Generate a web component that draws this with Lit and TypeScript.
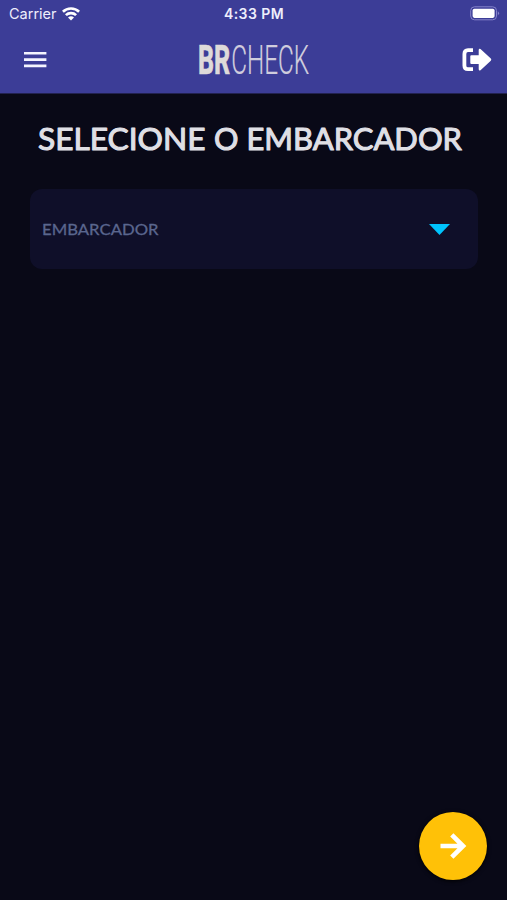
import { LitElement, html, css } from "lit";
import { customElement } from "lit/decorators.js";

@customElement("app-status-bar")
class AppStatusBar extends LitElement {
  static styles = css`
    :host { display: grid; grid-template-columns: 1fr auto 1fr; align-items: center; height: 27px; padding: 0 7px 0 9px; color: #eeeefc; font: 14.5px/27px Inter, sans-serif; }
    .carrier { display: flex; align-items: center; gap: 5px; }
    .time { margin-right: 1px; font-weight: 600; font-size: 14px; letter-spacing: 0.45px; }
    .battery { justify-self: end; }
    svg { display: block; }
  `;
  render() {
    return html`
      <div class="carrier">
        <span>Carrier</span>
        <svg width="18" height="14" viewBox="0 0 18 14" fill="none" stroke="#fff" stroke-width="2.7">
          <path d="M.9 4.7C5.3.4 12.7.4 17.1 4.7" />
          <path d="M3.9 8.1C6.7 5.4 11.3 5.4 14.1 8.1" />
          <path d="M9 13.5 6 10.5Q9 8 12 10.5Z" fill="#fff" stroke="none" />
        </svg>
      </div>
      <span class="time">4:33 PM</span>
      <svg class="battery" width="30" height="15" viewBox="0 0 30 15">
        <rect x=".7" y=".8" width="25.8" height="13" rx="3.8" fill="none" stroke="#8583ca" />
        <rect x="2.6" y="2.7" width="22" height="9.2" rx="1.8" fill="#fff" />
        <path d="M27.8 5.2Q30.4 7.3 27.8 9.4Z" fill="#8583ca" />
      </svg>
    `;
  }
}

@customElement("app-header")
class AppHeader extends LitElement {
  static styles = css`
    :host { display: grid; grid-template-columns: 1fr auto 1fr; align-items: center; height: 66px; padding: 0 15px 0 24px; }
    svg { display: block; }
    .logo { margin-right: 8px; font-family: Roboto, sans-serif; font-size: 40.5px; overflow: visible; }
    .heavy { font-weight: 800; fill: #dedad9; stroke: #dedad9; stroke-width: 0.5; }
    .light { font-weight: 300; fill: #d0cddd; stroke: #d0cddd; stroke-width: 0.2; }
    .exit { justify-self: end; }
  `;
  render() {
    return html`
      <svg width="23" height="16" viewBox="0 0 23 16" fill="#f4f4ff">
        <path d="M0 0h22.4v2.6H0zM0 6.3h22.4v2.6H0zM0 12.6h22.4v2.6H0z" />
      </svg>
      <svg class="logo" width="112" height="48" viewBox="0 -7 112 48" role="img" aria-label="BRCHECK">
        <text class="heavy" x="0" y="31" textLength="32.3" lengthAdjust="spacingAndGlyphs">BR</text>
        <text class="light" x="33.2" y="31" textLength="78" lengthAdjust="spacingAndGlyphs">CHECK</text>
      </svg>
      <svg class="exit" width="30" height="24" viewBox="0 0 30 24">
        <path d="M11 2.2H6Q2.4 2.2 2.4 6V17.4Q2.4 21.2 6 21.2H11" fill="none" stroke="#fff" stroke-width="3.8" />
        <path d="M8.3 8.2Q8.3 7.2 9.3 7.2H16.7V2Q16.9.2 18.5 1.1L28.8 10.5Q29.8 11.6 28.8 12.7L18.5 22.2Q16.9 23.1 16.7 21.3V16.1H9.3Q8.3 16.1 8.3 15.1Z" fill="#fff" />
      </svg>
    `;
  }
}

@customElement("app-root")
class AppRoot extends LitElement {
  static styles = css`
    :host { display: flex; flex-direction: column; box-sizing: border-box; height: 900px; background: #090917; font-family: Lato, sans-serif; }
    .top { background: #3c3d97; height: 93px; border-bottom: 1px solid #22224f; }
    svg { display: block; }
    .title { margin: 26px 30px 0; height: 40px; }
    .title svg { width: 100%; height: 40px; }
    .title text { font-size: 30.5px; font-weight: 400; fill: #dfdfe5; stroke: #dfdfe5; stroke-width: 1.1; stroke-linejoin: round; }
    .select { display: flex; align-items: center; justify-content: space-between; box-sizing: border-box; height: 80px; margin: 29px 29px 0 30px; padding: 0 28px 0 12px; border-radius: 12px; background: #0f0f29; }
    .select text { font-size: 16px; fill: #5a668e; stroke: #5a668e; stroke-width: 0.3; stroke-linejoin: round; }
    .next { display: grid; place-items: center; width: 68px; height: 68px; margin: auto 20px 20px auto; padding: 0; border: 0; border-radius: 50%; background: #ffc107; box-shadow: 0 1px 4px #000; }
  `;
  render() {
    return html`
      <div class="top">
        <app-status-bar></app-status-bar>
        <app-header></app-header>
      </div>
      <div class="title">
        <svg>
          <text x="8" y="30.4" textLength="167.5" lengthAdjust="spacingAndGlyphs">SELECIONE</text>
          <text x="184" y="30.4">O</text>
          <text x="216.5" y="30.4" textLength="215.5" lengthAdjust="spacingAndGlyphs">EMBARCADOR</text>
        </svg>
      </div>
      <div class="select">
        <svg width="120" height="24"><text x="0" y="18.4" textLength="116.5" lengthAdjust="spacingAndGlyphs">EMBARCADOR</text></svg>
        <svg width="21" height="11" viewBox="0 0 21 11"><path d="M0 0h21L10.5 11Z" fill="#00c3fc" /></svg>
      </div>
      <button class="next" aria-label="Avançar">
        <svg width="27" height="26" viewBox="0 0 27 26" fill="none" stroke="#fff" stroke-width="4.6">
          <path d="M0.5 13H23M11.8 1.8 23.1 13 11.8 24.2" />
        </svg>
      </button>
    `;
  }
}
